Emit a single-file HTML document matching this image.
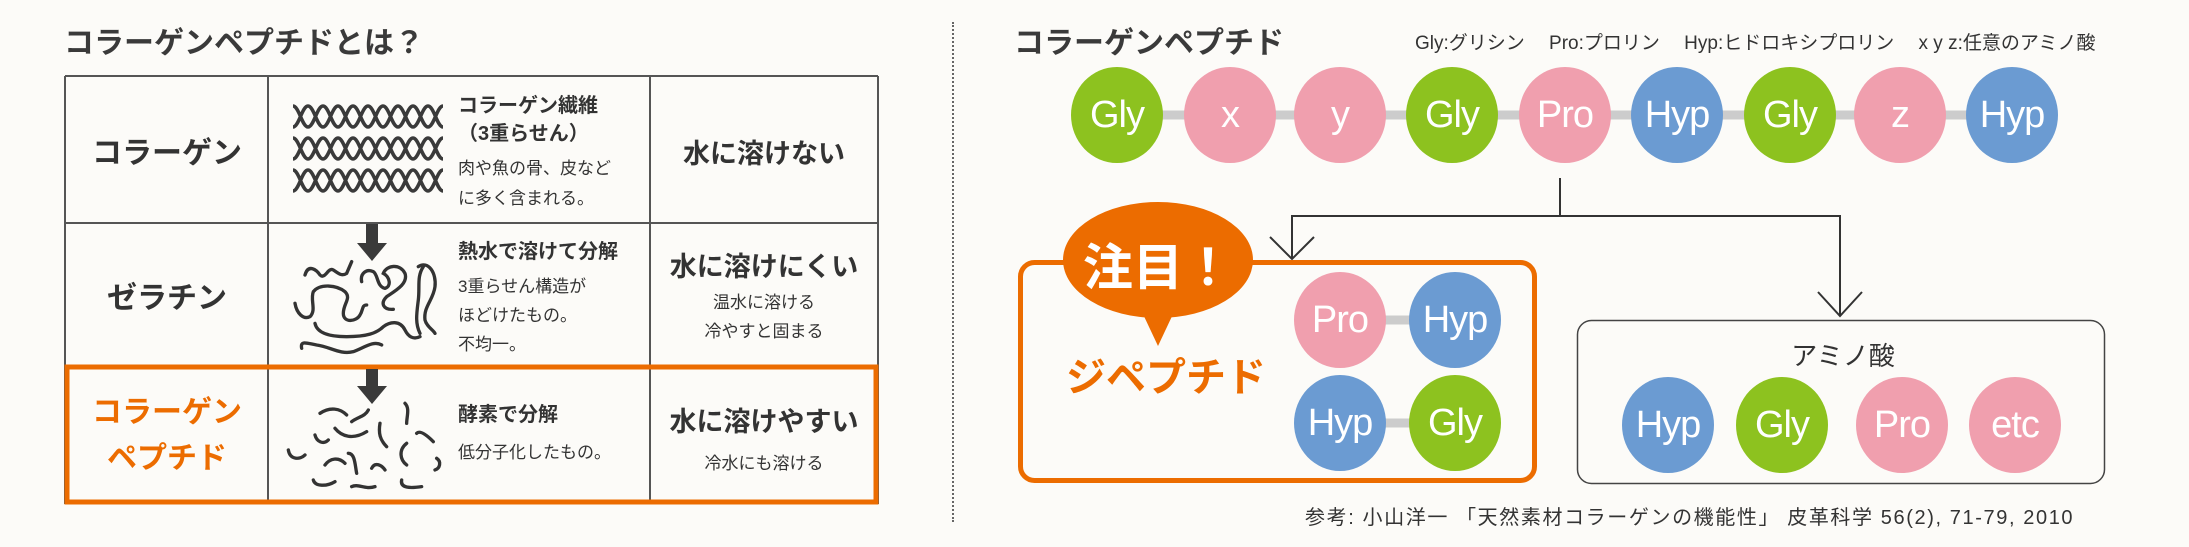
<!DOCTYPE html>
<html><head><meta charset="utf-8"><style>
*{margin:0;padding:0;box-sizing:border-box}
body{width:2189px;height:547px;background:#fcfbf8;position:relative;overflow:hidden;font-family:"Liberation Sans","Noto Sans CJK JP",sans-serif;color:#333}
.a{position:absolute;white-space:nowrap}
.b{font-weight:bold}
.c{position:absolute;width:92px;height:96px;border-radius:50%;color:#fff;font-size:38px;display:flex;align-items:center;justify-content:center;font-family:"Liberation Sans",sans-serif;letter-spacing:-1px}
.g{background:#8dc21f}.p{background:#f09fae}.h{background:#6b9bd2}
.ctr{text-align:center;transform:translateX(-50%)}
</style></head><body>
<div class="a b" style="left:64px;top:18px;font-size:30px;color:#3a3a3a">コラーゲンペプチドとは？</div>
<svg class="a" style="left:0;top:0" width="960" height="547">
<g stroke="#555" stroke-width="2" fill="none">
<line x1="65" y1="76" x2="878" y2="76"/><line x1="65" y1="223" x2="878" y2="223"/>
<line x1="65" y1="76" x2="65" y2="504"/><line x1="268" y1="76" x2="268" y2="504"/>
<line x1="650" y1="76" x2="650" y2="504"/><line x1="878" y1="76" x2="878" y2="504"/>
</g>
<rect x="67" y="367" width="809" height="135" fill="none" stroke="#ec6c00" stroke-width="5"/>
<g stroke="#3a3a3a" stroke-width="3.5" fill="none">
<path id="hx" d="M293,106 c6,0 9,21 15,21 c6,0 9,-21 15,-21 c6,0 9,21 15,21 c6,0 9,-21 15,-21 c6,0 9,21 15,21 c6,0 9,-21 15,-21 c6,0 9,21 15,21 c6,0 9,-21 15,-21 c6,0 9,21 15,21 c6,0 9,-21 15,-21 M293,127 c6,0 9,-21 15,-21 c6,0 9,21 15,21 c6,0 9,-21 15,-21 c6,0 9,21 15,21 c6,0 9,-21 15,-21 c6,0 9,21 15,21 c6,0 9,-21 15,-21 c6,0 9,21 15,21 c6,0 9,-21 15,-21 c6,0 9,21 15,21"/>
<use href="#hx" y="32"/><use href="#hx" y="64"/>
</g>
<g transform="translate(280,220) scale(0.3333)" stroke="#333" stroke-width="10" fill="none" stroke-linecap="round">
<path d="M75,165 C85,130 110,150 120,165 C135,180 145,140 160,150 C175,160 185,170 200,160 L215,125"/>
<path d="M245,185 C240,160 260,145 280,155 C295,165 290,200 315,205 C335,200 330,170 310,160 C320,135 360,130 375,160 C385,190 350,210 320,230 C300,250 310,270 340,268"/>
<path d="M45,250 C50,280 70,300 90,290 C110,270 90,240 100,215 C120,190 170,195 195,215 C215,235 190,250 190,280 C190,310 230,305 240,285 C250,270 245,255 260,255"/>
<path d="M105,310 C110,335 140,350 200,350 C260,350 290,340 310,320 C330,305 360,300 375,330 C385,350 400,360 420,350"/>
<path d="M415,140 C445,120 470,160 465,200 C460,240 430,260 435,300 C440,320 460,330 465,340"/>
<path d="M430,140 C410,170 420,200 415,240 C410,280 405,310 420,340"/>
<path d="M65,385 C60,360 80,370 110,375 C150,380 180,405 220,395 C250,385 280,360 305,375"/>
<path d="M120,580 C150,560 180,565 200,585"/><path d="M215,605 C235,590 255,590 265,570"/>
<path d="M375,550 C390,565 380,590 380,610"/><path d="M105,645 C110,665 130,675 145,660"/>
<path d="M165,625 C185,650 220,660 260,635"/><path d="M300,610 C295,640 300,660 320,680"/>
<path d="M410,640 C420,630 440,645 460,665"/><path d="M25,690 C30,720 60,720 75,705"/>
<path d="M135,735 C150,715 175,710 195,730"/><path d="M205,700 C225,700 225,735 230,760"/>
<path d="M275,745 C285,725 305,735 315,750"/><path d="M380,670 C355,690 360,720 380,735"/>
<path d="M470,715 C485,725 480,745 465,750"/><path d="M100,780 C105,800 140,800 165,785"/>
<path d="M215,800 C235,790 255,810 285,800"/><path d="M365,780 C360,805 390,805 425,800"/>
</g>
<g fill="#3a3a3a">
<rect x="366" y="224" width="12" height="20"/><polygon points="357,243 387,243 372,261"/>
<rect x="366" y="369" width="12" height="18"/><polygon points="357,386 387,386 372,404"/>
</g>
</svg>
<div class="a b ctr" style="left:167px;top:128px;font-size:30px">コラーゲン</div>
<div class="a b ctr" style="left:167px;top:273px;font-size:30px">ゼラチン</div>
<div class="a b ctr" style="left:167px;top:390px;font-size:30px;color:#ec6c00;line-height:46px">コラーゲン<br>ペプチド</div>
<div class="a b" style="left:458px;top:92px;font-size:20px;line-height:28px">コラーゲン繊維<br>（3重らせん）</div>
<div class="a" style="left:458px;top:154px;font-size:17px;line-height:30px">肉や魚の骨、皮など<br>に多く含まれる。</div>
<div class="a b" style="left:458px;top:235px;font-size:20px">熱水で溶けて分解</div>
<div class="a" style="left:458px;top:272px;font-size:17px;line-height:29px">3重らせん構造が<br>ほどけたもの。<br>不均一。</div>
<div class="a b" style="left:458px;top:398px;font-size:20px">酵素で分解</div>
<div class="a" style="left:458px;top:438px;font-size:17px">低分子化したもの。</div>
<div class="a b ctr" style="left:764px;top:132px;font-size:27px">水に溶けない</div>
<div class="a b ctr" style="left:764px;top:245px;font-size:27px">水に溶けにくい</div>
<div class="a ctr" style="left:764px;top:288px;font-size:17px;line-height:29px;text-align:center">温水に溶ける<br>冷やすと固まる</div>
<div class="a b ctr" style="left:764px;top:400px;font-size:27px">水に溶けやすい</div>
<div class="a ctr" style="left:764px;top:449px;font-size:17px">冷水にも溶ける</div>

<div class="a" style="left:952px;top:22px;height:500px;border-left:2px dotted #666"></div>

<div class="a b" style="left:1014px;top:18px;font-size:30px;color:#3a3a3a">コラーゲンペプチド</div>
<div class="a" style="left:1415px;top:28px;font-size:19px;color:#333">Gly:グリシン　 Pro:プロリン　 Hyp:ヒドロキシプロリン　 x y z:任意のアミノ酸</div>
<svg class="a" style="left:1000px;top:0" width="1189" height="547">
<line x1="110" y1="115" x2="1020" y2="115" stroke="#ccc" stroke-width="9"/>
<g stroke="#333" stroke-width="2" fill="none">
<path d="M560,178 V216 M292,258 V216 H840 V316"/>
<path d="M270,237 L292,259 L314,237 M818,292 L840,316 L862,292"/>
</g>
<rect x="20.5" y="262.5" width="514" height="218" rx="14" fill="none" stroke="#ec6c00" stroke-width="5"/>
<rect x="577.5" y="320.5" width="527" height="163" rx="14" fill="none" stroke="#444" stroke-width="1.5"/>
<ellipse cx="158" cy="260" rx="95" ry="58" fill="#ec6c00"/>
<polygon points="142,312 174,312 158,346" fill="#ec6c00"/>
<line x1="340" y1="320" x2="455" y2="320" stroke="#ccc" stroke-width="9"/>
<line x1="340" y1="423" x2="455" y2="423" stroke="#ccc" stroke-width="9"/>
</svg>
<div class="a b ctr" style="left:1158px;top:228px;font-size:50px;color:#fff">注目！</div>
<div class="a b ctr" style="left:1166px;top:345px;font-size:40px;color:#ec6c00">ジペプチド</div>
<div class="a ctr" style="left:1843px;top:336px;font-size:26px;color:#333">アミノ酸</div>

<div class="c g" style="left:1071px;top:67px">Gly</div>
<div class="c p" style="left:1184px;top:67px">x</div>
<div class="c p" style="left:1294px;top:67px">y</div>
<div class="c g" style="left:1406px;top:67px">Gly</div>
<div class="c p" style="left:1519px;top:67px">Pro</div>
<div class="c h" style="left:1631px;top:67px">Hyp</div>
<div class="c g" style="left:1744px;top:67px">Gly</div>
<div class="c p" style="left:1854px;top:67px">z</div>
<div class="c h" style="left:1966px;top:67px">Hyp</div>

<div class="c p" style="left:1294px;top:272px">Pro</div>
<div class="c h" style="left:1409px;top:272px">Hyp</div>
<div class="c h" style="left:1294px;top:375px">Hyp</div>
<div class="c g" style="left:1409px;top:375px">Gly</div>

<div class="c h" style="left:1622px;top:377px">Hyp</div>
<div class="c g" style="left:1736px;top:377px">Gly</div>
<div class="c p" style="left:1856px;top:377px">Pro</div>
<div class="c p" style="left:1969px;top:377px">etc</div>

<div class="a" style="left:1305px;top:501px;font-size:20px;color:#333;letter-spacing:1.6px">参考: 小山洋一 「天然素材コラーゲンの機能性」 皮革科学 56(2), 71-79, 2010</div>
</body></html>
